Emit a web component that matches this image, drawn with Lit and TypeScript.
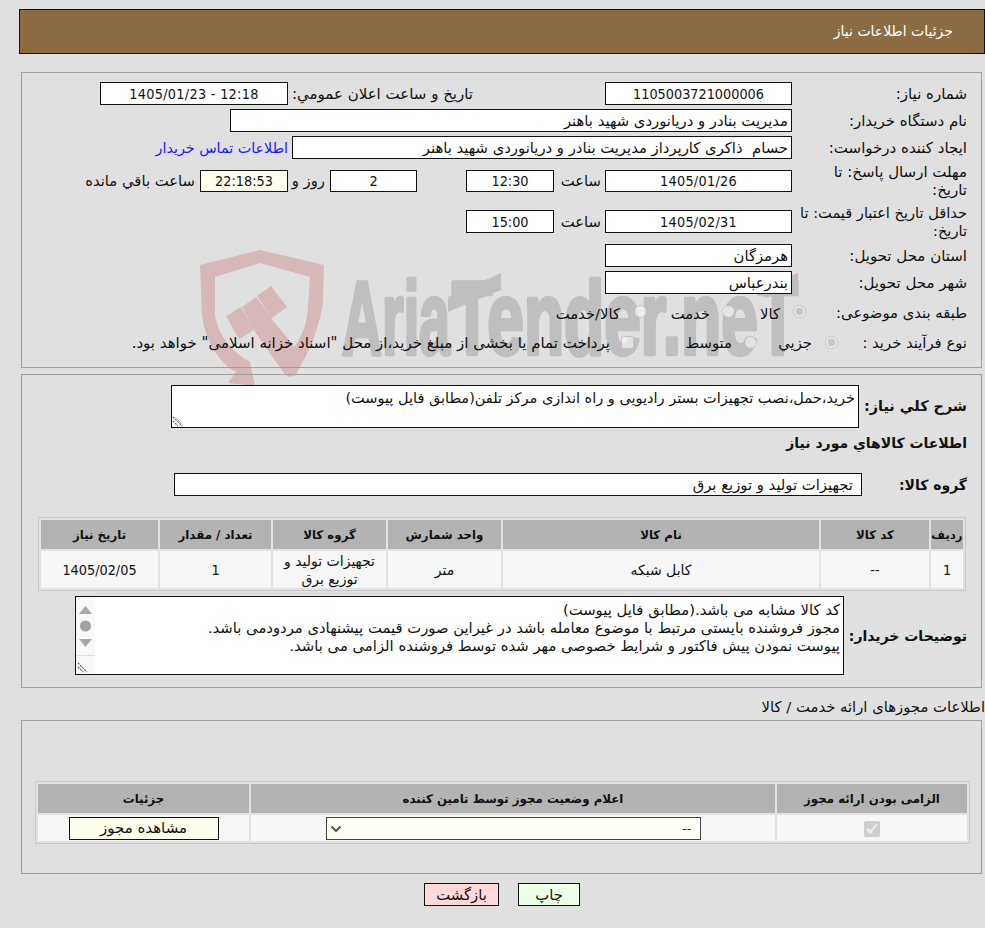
import { LitElement, html, css, svg } from "lit";
import { customElement } from "lit/decorators.js";

const grip = svg`<svg class="gripsvg" width="12" height="12" viewBox="0 0 12 12"><path d="M1 2 L10 11 M1 6 L6 11" stroke="#666" stroke-width="1.2" stroke-dasharray="2 1" fill="none"/><path d="M3 2 L11 10" stroke="#ccc" stroke-width="1" fill="none"/></svg>`;

@customElement("app-root")
export class AppRoot extends LitElement {
  static styles = css`
    :host { display: block; min-height: 928px; background: #e0e0e0; position: relative; overflow: hidden;
      font-family: "DejaVu Sans", Tahoma, sans-serif; font-size: 14.8px; line-height: 18px; color: #111; }
    .wm { position: absolute; left: 0; top: 0; z-index: 0; pointer-events: none; }
    .wmt { font-family: "Liberation Sans", sans-serif; font-weight: 700; fill: #bfbfbf; stroke: #bfbfbf; stroke-width: 4.5; stroke-linejoin: round; }
    .page { position: relative; z-index: 1; padding: 9px 0 0 19px; direction: rtl; }
    .hdr { box-sizing: border-box; height: 45px; background: #8c6c42; border: 1px solid #111; color: #fff;
      display: flex; align-items: center; padding-right: 31px; font-size: 14px; padding-bottom: 2px; }
    .sec { box-sizing: border-box; width: 961px; margin-left: 2px; margin-right: 3px; border: 1px solid #a0a0a0; }
    .s1 { margin-top: 18px; height: 296px; padding: 9px 14px 0 0; display: flex; flex-direction: column; gap: 4px; }
    .s2 { margin-top: 6px; height: 314px; padding: 10px 14px 0 0; }
    .s3 { height: 154px; padding: 60px 11px 0 11px; }
    .row { display: flex; align-items: center; height: 23px; }
    .row.t4 { height: 36px; }
    .row.t5 { height: 37px; }
    .row.rd { height: 26px; }
    .lab { width: 167px; margin-left: 8px; flex: none; font-size: 15px; }
    .lab1 { white-space: nowrap; }
    .lab6 { width: 175px; margin-left: 0; font-size: 14.6px; }
    .box { box-sizing: border-box; height: 23px; background: #fff; border: 1px solid #111; display: flex; align-items: center; padding: 0 3px; flex: none; white-space: nowrap; }
    .num { justify-content: center; direction: ltr; font-family: "DejaVu Sans Condensed", "DejaVu Sans", sans-serif; font-size: 14.3px; }
    .sl { letter-spacing: 0.3px; }
    .w187 { width: 187px; } .w188 { width: 188px; } .w562 { width: 562px; } .w500 { width: 500px; } .w88 { width: 88px; } .w87 { width: 87px; }
    .h22 { height: 22px; }
    .cream { background: #ffffee; }
    .lab2 { margin-right: 132px; width: 180px; margin-left: 5px; white-space: nowrap; }
    .link { color: #1a1aff; margin-right: 4px; font-size: 14.3px; white-space: nowrap; }
    .sa { width: 43px; margin: 0 4px; flex: none; white-space: nowrap; }
    .rz { width: 32px; margin: 0 5px; flex: none; white-space: nowrap; }
    .rem { margin-right: 5px; white-space: nowrap; }
    .gap49 { margin-right: 49px; }
    input[type=radio], input.sq { margin: 0; width: 13px; height: 13px; flex: none; }
    .lab3 { width: 161px; flex: none; margin-top: 4px; white-space: nowrap; }
    .lab4 { width: 129px; flex: none; margin-top: 4px; white-space: nowrap; }
    .rtx { flex: none; box-sizing: border-box; white-space: nowrap; margin-top: 6px; }
    .c1 { width: 58px; padding-right: 13px; } .c2 { width: 75px; padding-right: 12px; } .c3 { padding-right: 14px; }
    .r2 .rtx { margin-top: 4px; }
    .r2 input { margin-top: 2px; }
    .c4 { width: 68px; padding-right: 13px; } .c5 { width: 110px; padding-right: 12px; } .c6 { padding-right: 11px; font-size: 15px; }
    .b { font-weight: 700; font-size: 14px; }
    .s2r1 { display: flex; }
    .s2r1 .b { width: 108px; flex: none; margin-top: 12px; font-size: 14.4px; }
    .ta { box-sizing: border-box; width: 688px; height: 43px; background: #fff; border: 1px solid #111; padding: 3px 3px; position: relative; font-size: 14.5px; }
    .gripsvg { position: absolute; left: 0; bottom: 0; }
    .ttl { margin-top: 6px; height: 18px; line-height: 18px; }
    .s2r3 { display: flex; align-items: center; margin-top: 21px; }
    .s2r3 .b { width: 105px; flex: none; }
    .s2r3 .box { width: 688px; padding-right: 8px; }
    table { border-collapse: separate; border-spacing: 2px; background: #e2e2e2; border: 1px solid #c8c8c8; table-layout: fixed; }
    th { background: #b3b3b3; font-weight: 700; font-size: 11.8px; padding: 0; height: 29px; text-align: center; }
    td { background: #f6f6f6; padding: 0; text-align: center; font-size: 14px; }
    .dg { font-family: "DejaVu Sans Condensed", "DejaVu Sans", sans-serif; font-size: 14.3px; }
    .t1 { width: 928px; margin: 21px 1px 0 0; }
    .t1 td { height: 37px; }
    .s2r5 { display: flex; margin-top: 5px; }
    .s2r5 .b { width: 123px; flex: none; margin-top: 31px; }
    .notes { box-sizing: border-box; width: 769px; height: 79px; background: #fff; border: 1px solid #111; position: relative; padding: 4px 3px 0 20px; white-space: nowrap; }
    .sb { position: absolute; left: 0; top: 0; bottom: 0; width: 19px; background: #f9f9f9; }
    .sb svg { position: absolute; left: 0; top: 0; }
    .sttl { margin-top: 10px; height: 22px; margin-right: 0; white-space: nowrap; }
    .t2 { width: 935px; }
    .t2 td { height: 26px; }
    .chk { margin: 0; width: 16px; height: 16px; vertical-align: middle; }
    .selw { position: relative; display: inline-block; vertical-align: middle; line-height: 0; }
    select { box-sizing: border-box; direction: rtl; appearance: none; width: 375px; height: 23px; background: #fefff5; border: 1px solid #444; border-radius: 0; font: 13px "DejaVu Sans", sans-serif; color: #333; opacity: 1; padding: 0 8px; }
    .chev { position: absolute; left: 4px; top: 8px; }
    .vb { box-sizing: border-box; display: inline-flex; align-items: center; justify-content: center; width: 150px; height: 23px; background: #ffffee; border: 1px solid #111; font: inherit; font-size: 15px; color: #111; vertical-align: middle; padding: 0; }
    .btns { display: flex; justify-content: center; gap: 19px; margin-top: 9px; direction: rtl; width: 966px; box-sizing: border-box; }
    .btn { box-sizing: border-box; height: 23px; border: 1px solid #111; font: inherit; padding: 0; display: flex; align-items: center; justify-content: center; color: #111; }
    .print { width: 62px; background: #eeffe9; }
    .back { width: 75px; background: #ffd9d9; }
  `;

  render() {
    return html`
      <svg class="wm" width="985" height="400" viewBox="0 0 985 400" aria-hidden="true">
        <path fill="#d6b8b9" d="M200 265 L260 250 L324 265 L323 302 C320 325 310 352 295 375 L292 350 C300 340 308 325 308 305 L310 277 L260 263 L215 277 L215 315 C218 335 232 352 250 362 L255 386 L228 383 L236 372 C218 362 205 340 202 315 Z"/>
        <path fill="#d6b8b9" d="M255 332 L270 317 L297 350 L297 375 L288 377 L283 372 Z"/>
        <path fill="#d6b8b9" d="M226 316 L241 307 L254 330 L239 339 Z M242 307 L256 297 L272 318 L255 332 Z M257 296 L271 286 L287 307 L272 318 Z"/>
        <text class="wmt" x="342" y="354" font-size="103" textLength="108" lengthAdjust="spacingAndGlyphs">Aria</text>
        <text class="wmt" x="452" y="354" font-size="103" textLength="346" lengthAdjust="spacingAndGlyphs">Tender.neT</text>
        <path fill="#bfbfbf" d="M448 297 L501 273 L501 290 L448 312 Z M765 286 L798 273 L798 287 L765 298 Z"/>
      </svg>
      <div class="page">
        <div class="hdr">جزئیات اطلاعات نیاز</div>
        <div class="sec s1">
          <div class="row">
            <div class="lab">شماره نیاز:</div>
            <div class="box num w187">1105003721000006</div>
            <div class="lab lab2">تاریخ و ساعت اعلان عمومي:</div>
            <div class="box num sl w188">1405/01/23 - 12:18</div>
          </div>
          <div class="row">
            <div class="lab">نام دستگاه خریدار:</div>
            <div class="box w562">مدیریت بنادر و دریانوردی شهید باهنر</div>
          </div>
          <div class="row">
            <div class="lab lab1">ایجاد کننده درخواست:</div>
            <div class="box w500">حسام&nbsp; ذاکری کارپرداز مدیریت بنادر و دریانوردی شهید باهنر</div>
            <a class="link">اطلاعات تماس خریدار</a>
          </div>
          <div class="row t4">
            <div class="lab">مهلت ارسال پاسخ: تا تاریخ:</div>
            <div class="box num sl w187 h22">1405/01/26</div>
            <div class="sa">ساعت</div>
            <div class="box num w88 h22">12:30</div>
            <div class="box num w87 h22 gap49">2</div>
            <div class="rz">روز و</div>
            <div class="box num w88 h22 cream">22:18:53</div>
            <div class="rem">ساعت باقي مانده</div>
          </div>
          <div class="row t5">
            <div class="lab lab6">حداقل تاریخ اعتبار قیمت: تا تاریخ:</div>
            <div class="box num sl w187">1405/02/31</div>
            <div class="sa">ساعت</div>
            <div class="box num w88">15:00</div>
          </div>
          <div class="row">
            <div class="lab">استان محل تحویل:</div>
            <div class="box w187">هرمزگان</div>
          </div>
          <div class="row">
            <div class="lab">شهر محل تحویل:</div>
            <div class="box w187">بندرعباس</div>
          </div>
          <div class="row rd">
            <div class="lab3">طبقه بندی موضوعی:</div>
            <input type="radio" disabled checked name="a" />
            <div class="rtx c1">کالا</div>
            <input type="radio" disabled name="a" />
            <div class="rtx c2">خدمت</div>
            <input type="radio" disabled name="a" />
            <div class="rtx c3">کالا/خدمت</div>
          </div>
          <div class="row rd r2">
            <div class="lab4">نوع فرآیند خرید :</div>
            <input type="radio" disabled checked name="b" />
            <div class="rtx c4">جزيي</div>
            <input type="radio" disabled name="b" />
            <div class="rtx c5">متوسط</div>
            <input class="sq" type="checkbox" disabled />
            <div class="rtx c6">پرداخت تمام یا بخشی از مبلغ خرید،از محل "اسناد خزانه اسلامی" خواهد بود.</div>
          </div>
        </div>
        <div class="sec s2">
          <div class="s2r1">
            <div class="b">شرح کلي نياز:</div>
            <div class="ta">خرید،حمل،نصب تجهیزات بستر رادیویی و راه اندازی مرکز تلفن(مطابق فایل پیوست)${grip}</div>
          </div>
          <div class="b ttl">اطلاعات کالاهاي مورد نياز</div>
          <div class="s2r3">
            <div class="b">گروه کالا:</div>
            <div class="box">تجهیزات تولید و توزیع برق</div>
          </div>
          <table class="t1">
            <colgroup><col style="width:32px"/><col style="width:108px"/><col style="width:316px"/><col style="width:113px"/><col style="width:113px"/><col style="width:111px"/><col style="width:117px"/></colgroup>
            <tr><th>ردیف</th><th>کد کالا</th><th>نام کالا</th><th>واحد شمارش</th><th>گروه کالا</th><th>تعداد / مقدار</th><th>تاریخ نیاز</th></tr>
            <tr><td class="dg">1</td><td class="dg">--</td><td>کابل شبکه</td><td>متر</td><td>تجهیزات تولید و توزیع برق</td><td class="dg">1</td><td class="dg">1405/02/05</td></tr>
          </table>
          <div class="s2r5">
            <div class="b">توضیحات خریدار:</div>
            <div class="notes">
              <div>کد کالا مشابه می باشد.(مطابق فایل پیوست)</div>
              <div>مجوز فروشنده بایستی مرتبط با موضوع معامله باشد در غیراین صورت قیمت پیشنهادی مردودمی باشد.</div>
              <div>پیوست نمودن پیش فاکتور و شرایط خصوصی مهر شده توسط فروشنده الزامی می باشد.</div>
              <div class="sb"><svg width="19" height="77" viewBox="0 0 19 77">
                <path d="M3 17 L16 17 L9.5 9 Z M3 42 L16 42 L9.5 50 Z" fill="#a8a8a8"/>
                <circle cx="9.5" cy="29" r="5.5" fill="#a0a0a0"/>
                <path d="M0 58.5 H19" stroke="#ddd"/>
                <path d="M2 66 L11 75 M2 70 L7 75" stroke="#666" stroke-width="1.2" stroke-dasharray="2 1" fill="none"/>
              </svg></div>
            </div>
          </div>
        </div>
        <div class="sttl">اطلاعات مجوزهای ارائه خدمت / کالا</div>
        <div class="sec s3">
          <table class="t2">
            <colgroup><col style="width:190px"/><col style="width:524px"/><col style="width:211px"/></colgroup>
            <tr><th>الزامی بودن ارائه مجوز</th><th>اعلام وضعیت مجوز توسط تامین کننده</th><th>جزئیات</th></tr>
            <tr>
              <td><input class="chk" type="checkbox" checked disabled /></td>
              <td><span class="selw"><select disabled><option>--</option></select><svg class="chev" width="12" height="8" viewBox="0 0 12 8"><path d="M1.5 1.5 L6 6 L10.5 1.5" fill="none" stroke="#555" stroke-width="2"/></svg></span></td>
              <td><button class="vb">مشاهده مجوز</button></td>
            </tr>
          </table>
        </div>
        <div class="btns">
          <button class="btn print">چاپ</button>
          <button class="btn back">بازگشت</button>
        </div>
      </div>
    `;
  }
}
